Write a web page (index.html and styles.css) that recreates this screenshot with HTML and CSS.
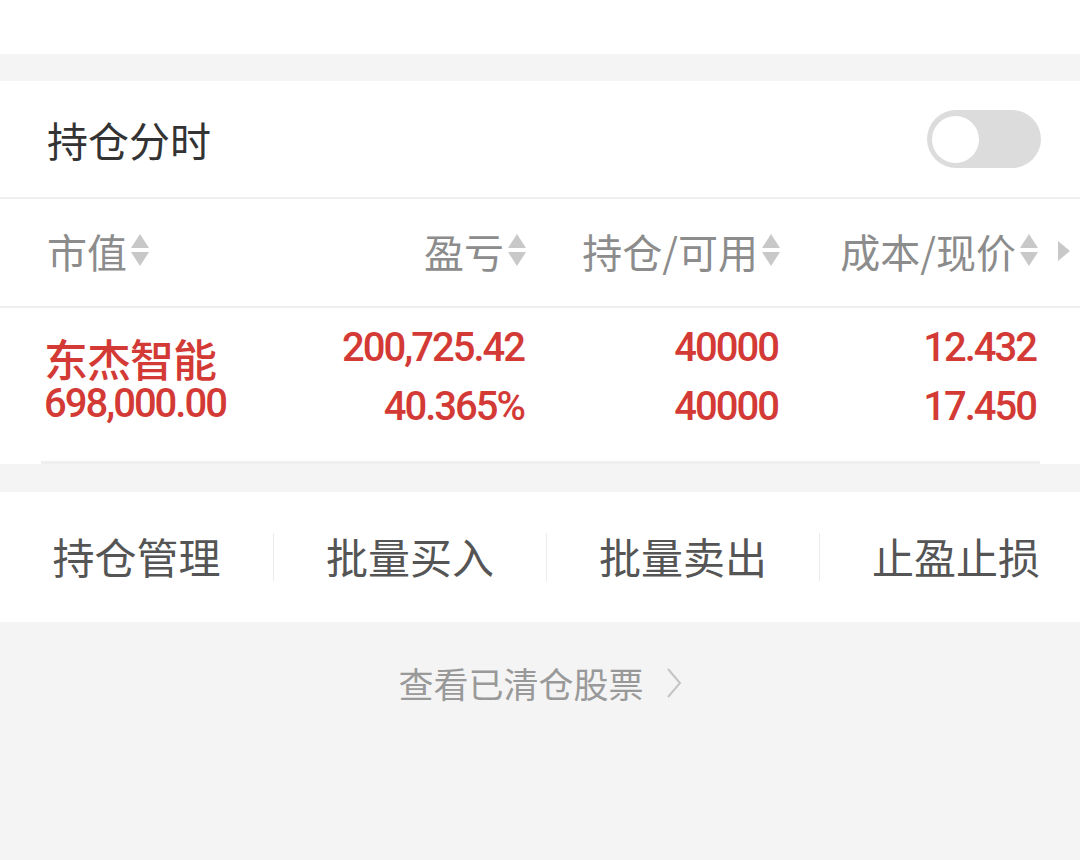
FILE: index.html
```html
<!DOCTYPE html>
<html lang="zh-CN">
<head>
  <meta charset="UTF-8" />
  <title>持仓</title>
  <link rel="stylesheet" href="styles.css">
</head>
<body>
  <div class="topbar"></div>

  <div class="panel">
    <div class="title-row">
      <span class="title">持仓分时</span>
      <div class="toggle"><div class="knob"></div></div>
    </div>

    <div class="table-head">
      <div class="th left">市值<svg class="sort" viewBox="0 0 20 36"><polygon points="10,1 19,15 1,15"/><polygon points="1,19 19,19 10,33"/></svg></div>
      <div class="th">盈亏<svg class="sort" viewBox="0 0 20 36"><polygon points="10,1 19,15 1,15"/><polygon points="1,19 19,19 10,33"/></svg></div>
      <div class="th">持仓/可用<svg class="sort" viewBox="0 0 20 36"><polygon points="10,1 19,15 1,15"/><polygon points="1,19 19,19 10,33"/></svg></div>
      <div class="th">成本/现价<svg class="sort" viewBox="0 0 20 36"><polygon points="10,1 19,15 1,15"/><polygon points="1,19 19,19 10,33"/></svg></div>
      <div class="more"><svg viewBox="0 0 14 22"><polygon points="1,1 13,11 1,21"/></svg></div>
    </div>

    <div class="stock-row">
      <div class="cell name-cell">
        <div class="name">东杰智能</div>
        <div class="num">698,000.00</div>
      </div>
      <div class="cell">
        <div class="num">200,725.42</div>
        <div class="num">40.365%</div>
      </div>
      <div class="cell">
        <div class="num">40000</div>
        <div class="num">40000</div>
      </div>
      <div class="cell">
        <div class="num">12.432</div>
        <div class="num">17.450</div>
      </div>
    </div>
    <div class="row-line"></div>
  </div>

  <div class="actions">
    <div class="action">持仓管理</div>
    <div class="action">批量买入</div>
    <div class="action">批量卖出</div>
    <div class="action">止盈止损</div>
  </div>

  <div class="cleared">
    <span>查看已清仓股票</span>
    <svg class="chevron" viewBox="0 0 16 32"><polyline points="2,2 14,16 2,30"/></svg>
  </div>
</body>
</html>
```

FILE: styles.css
```css
body {
  margin: 0;
  background: #f4f4f4;
  font-family: "Noto Sans CJK SC", "Noto Sans", sans-serif;
  overflow-x: hidden;
}

.topbar {
  height: 54px;
  background: #fff;
  margin-bottom: 27px;
}

.panel {
  background: #fff;
  margin-bottom: 28px;
}

.title-row {
  height: 116px;
  display: flex;
  align-items: center;
  justify-content: space-between;
  padding: 0 39px 0 47px;
  border-bottom: 2px solid #efefef;
}

.title {
  font-size: 41px;
  line-height: 48px;
  color: #333;
}

.toggle {
  width: 114px;
  height: 58px;
  border-radius: 29px;
  background: #dcdcdc;
  display: flex;
  align-items: center;
  padding-left: 5px;
  box-sizing: border-box;
}

.knob {
  width: 47px;
  height: 47px;
  border-radius: 50%;
  background: #fff;
}

.table-head {
  height: 109px;
  display: grid;
  grid-template-columns: 220px 260px 254px 258px 44px;
  align-items: center;
  padding-left: 47px;
  padding-bottom: 4px;
  box-sizing: border-box;
  border-bottom: 2px solid #efefef;
}

.th {
  display: flex;
  align-items: center;
  justify-content: flex-end;
  font-size: 40px;
  line-height: 46px;
  color: #8c8c8c;
}

.th.left {
  justify-content: flex-start;
}

.sort {
  width: 20px;
  height: 36px;
  margin-left: 3px;
  fill: #c8c8c8;
}

.more {
  display: flex;
  justify-content: center;
  padding-left: 6px;
}

.more svg {
  width: 14px;
  height: 22px;
  fill: #c8c8c8;
}

.stock-row {
  height: 153px;
  display: grid;
  grid-template-columns: 220px 260px 254px 258px;
  padding-left: 44px;
  box-sizing: border-box;
}

.cell {
  display: flex;
  flex-direction: column;
  align-items: flex-end;
  padding-top: 10px;
}

.name-cell {
  align-items: flex-start;
  padding-top: 27px;
  white-space: nowrap;
}

.name {
  font-size: 44px;
  font-weight: 500;
  line-height: 46px;
  color: #d33a36;
  letter-spacing: -1px;
}

.num {
  font-family: Roboto, "Liberation Sans", sans-serif;
  font-size: 40px;
  font-weight: 500;
  line-height: 59px;
  color: #d33a36;
  letter-spacing: -2px;
}

.name-cell .num {
  line-height: 46px;
}

.row-line {
  height: 3px;
  margin: 0 40px 0 41px;
  background: #efefef;
}

.actions {
  height: 130px;
  background: #fff;
  display: flex;
  align-items: center;
  overflow: hidden;
}

.action {
  flex: 0 0 273px;
  height: 48px;
  line-height: 46px;
  text-align: center;
  font-size: 42px;
  color: #555;
  box-sizing: border-box;
}

.action + .action {
  border-left: 1px solid #ececec;
}

.cleared {
  display: flex;
  justify-content: center;
  align-items: center;
  gap: 22px;
  padding-top: 40px;
  font-size: 35px;
  line-height: 42px;
  color: #999;
}

.chevron {
  width: 16px;
  height: 32px;
  fill: none;
  stroke: #c4c4c4;
  stroke-width: 2;
}
```
